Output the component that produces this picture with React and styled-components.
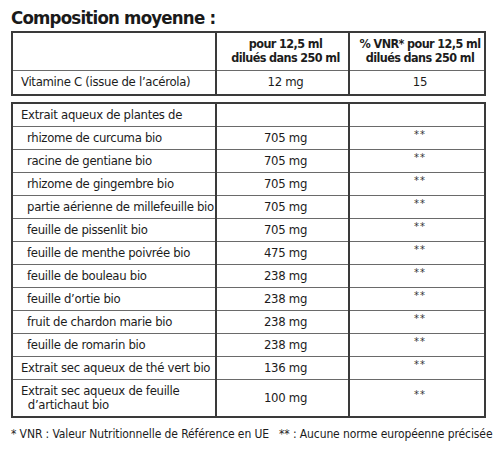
import React from 'react';
import styled, { createGlobalStyle } from 'styled-components';

const GlobalStyle = createGlobalStyle`
  body {
    margin: 0;
    background: #ffffff;
    font-family: "DejaVu Sans Condensed", "Liberation Sans Narrow", "Liberation Sans", sans-serif;
    color: #1c1c1c;
  }
`;

const Page = styled.div`
  width: 500px;
  height: 457px;
  padding: 7px 0 0 11px;
  box-sizing: border-box;
`;

const Title = styled.h1`
  margin: 0;
  height: 24px;
  font-size: 18.5px;
  line-height: 22px;
  letter-spacing: -0.8px;
  font-weight: 700;
  color: #1a1a1a;
`;

const Table = styled.table`
  width: 474px;
  border-collapse: collapse;
  table-layout: fixed;
  border: 2px solid #3a3a3a;
  margin-bottom: ${(props) => props.$gap || 0}px;
  font-size: 13px;
  letter-spacing: -0.3px;
`;

const Row = styled.tr`
  height: ${(props) => props.$height || 23}px;
`;

const Cell = styled.td`
  border-top: 1px solid #6a6a6a;
  border-bottom: 1px solid #6a6a6a;
  border-left: 2px solid #3a3a3a;
  border-right: 2px solid #3a3a3a;
  padding: 0 2px 0 ${(props) => (props.$indent ? 14 : 8)}px;
  text-align: ${(props) => props.$align || 'left'};
  vertical-align: middle;
  line-height: 14px;
  white-space: nowrap;
  overflow: hidden;
  font-weight: ${(props) => (props.$bold ? 700 : 400)};
  font-size: ${(props) => (props.$bold ? '12.5px' : 'inherit')};
  letter-spacing: ${(props) => (props.$bold ? '-0.6px' : 'inherit')};
`;

const Stars = styled.span`
  font-size: 11px;
  position: relative;
  top: -3px;
  letter-spacing: 1px;
  color: #333;
`;

const Wrap = styled.span`
  display: block;
  white-space: normal;
  line-height: 14px;
`;

const Footnote = styled.p`
  margin: 9px 0 0 0;
  font-size: 12px;
  letter-spacing: -0.1px;
  color: #1c1c1c;
  white-space: nowrap;
`;

const plants = [
  ['rhizome de curcuma bio', '705 mg'],
  ['racine de gentiane bio', '705 mg'],
  ['rhizome de gingembre bio', '705 mg'],
  ['partie aérienne de millefeuille bio', '705 mg'],
  ['feuille de pissenlit bio', '705 mg'],
  ['feuille de menthe poivrée bio', '475 mg'],
  ['feuille de bouleau bio', '238 mg'],
  ["feuille d’ortie bio", '238 mg'],
  ['fruit de chardon marie bio', '238 mg'],
  ['feuille de romarin bio', '238 mg'],
];

const Cols = () => (
  <colgroup>
    <col style={{ width: 204 }} />
    <col style={{ width: 133 }} />
    <col style={{ width: 136 }} />
  </colgroup>
);

export default function App() {
  return (
    <Page>
      <GlobalStyle />
      <Title>Composition moyenne :</Title>
      <Table $gap={6}>
        <Cols />
        <tbody>
          <Row $height={38}>
            <Cell />
            <Cell $align="center" $bold>
              pour 12,5 ml
              <br />
              dilués dans 250 ml
            </Cell>
            <Cell $align="center" $bold>
              % VNR* pour 12,5 ml
              <br />
              dilués dans 250 ml
            </Cell>
          </Row>
          <Row $height={25}>
            <Cell>Vitamine C (issue de l’acérola)</Cell>
            <Cell $align="center">12 mg</Cell>
            <Cell $align="center">15</Cell>
          </Row>
        </tbody>
      </Table>
      <Table>
        <Cols />
        <tbody>
          <Row>
            <Cell>Extrait aqueux de plantes de</Cell>
            <Cell />
            <Cell />
          </Row>
          {plants.map(([name, dose]) => (
            <Row key={name}>
              <Cell $indent>{name}</Cell>
              <Cell $align="center">{dose}</Cell>
              <Cell $align="center">
                <Stars>**</Stars>
              </Cell>
            </Row>
          ))}
          <Row>
            <Cell>Extrait sec aqueux de thé vert bio</Cell>
            <Cell $align="center">136 mg</Cell>
            <Cell $align="center">
              <Stars>**</Stars>
            </Cell>
          </Row>
          <Row $height={38}>
            <Cell>
              <Wrap>
                Extrait sec aqueux de feuille
                <br />
                &nbsp;&nbsp;d’artichaut bio
              </Wrap>
            </Cell>
            <Cell $align="center">100 mg</Cell>
            <Cell $align="center">
              <Stars>**</Stars>
            </Cell>
          </Row>
        </tbody>
      </Table>
      <Footnote>
        * VNR : Valeur Nutritionnelle de Référence en UE&nbsp;&nbsp;&nbsp;** : Aucune norme européenne précisée
      </Footnote>
    </Page>
  );
}
